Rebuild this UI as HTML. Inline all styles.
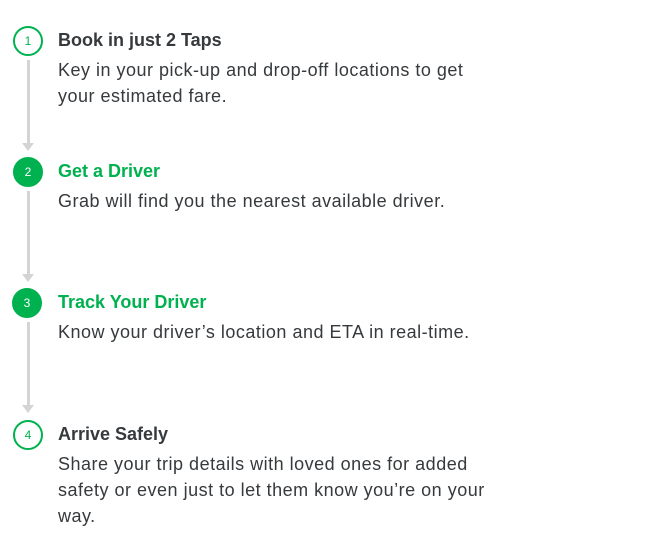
<!DOCTYPE html>
<html><head><meta charset="utf-8"><style>
html,body{margin:0;padding:0;background:#fff;width:658px;height:558px;overflow:hidden;font-family:"Liberation Sans",sans-serif}
.c{position:absolute;left:13px;width:26px;height:26px;border:2px solid #00b14f;border-radius:50%;color:#00b14f;font-size:12px;line-height:26px;text-align:center;background:#fff}
.c.f{background:#00b14f;color:#fff}
.t{position:absolute;left:58px;font-size:18px;font-weight:bold;line-height:24px;color:#363a3d;white-space:nowrap}
.g{color:#00b14f}
.d{position:absolute;left:58px;font-size:18px;letter-spacing:0.5px;line-height:26px;color:#363a3d;white-space:nowrap}
.l{position:absolute;left:27px;width:3px;background:#d4d4d4}
.a{position:absolute;left:22px;width:0;height:0;border-left:6.5px solid transparent;border-right:6.5px solid transparent;border-top:8px solid #d4d4d4}
</style></head><body>
<div class="l" style="top:60px;height:84px"></div><div class="a" style="top:143px"></div>
<div class="l" style="top:191px;height:84px"></div><div class="a" style="top:274px"></div>
<div class="l" style="top:322px;height:84px"></div><div class="a" style="top:405px"></div>

<div class="c" style="top:26px">1</div>
<div class="c f" style="top:157px">2</div>
<div class="c f" style="top:288px;left:12px">3</div>
<div class="c" style="top:420px">4</div>

<div class="t" style="top:28px">Book in just 2 Taps</div>
<div class="d" style="top:57px">Key in your pick-up and drop-off locations to get<br>your estimated fare.</div>

<div class="t g" style="top:159px">Get a Driver</div>
<div class="d" style="top:188px">Grab will find you the nearest available driver.</div>

<div class="t g" style="top:290px">Track Your Driver</div>
<div class="d" style="top:319px">Know your driver’s location and ETA in real-time.</div>

<div class="t" style="top:422px">Arrive Safely</div>
<div class="d" style="top:451px">Share your trip details with loved ones for added<br>safety or even just to let them know you’re on your<br>way.</div>
</body></html>
